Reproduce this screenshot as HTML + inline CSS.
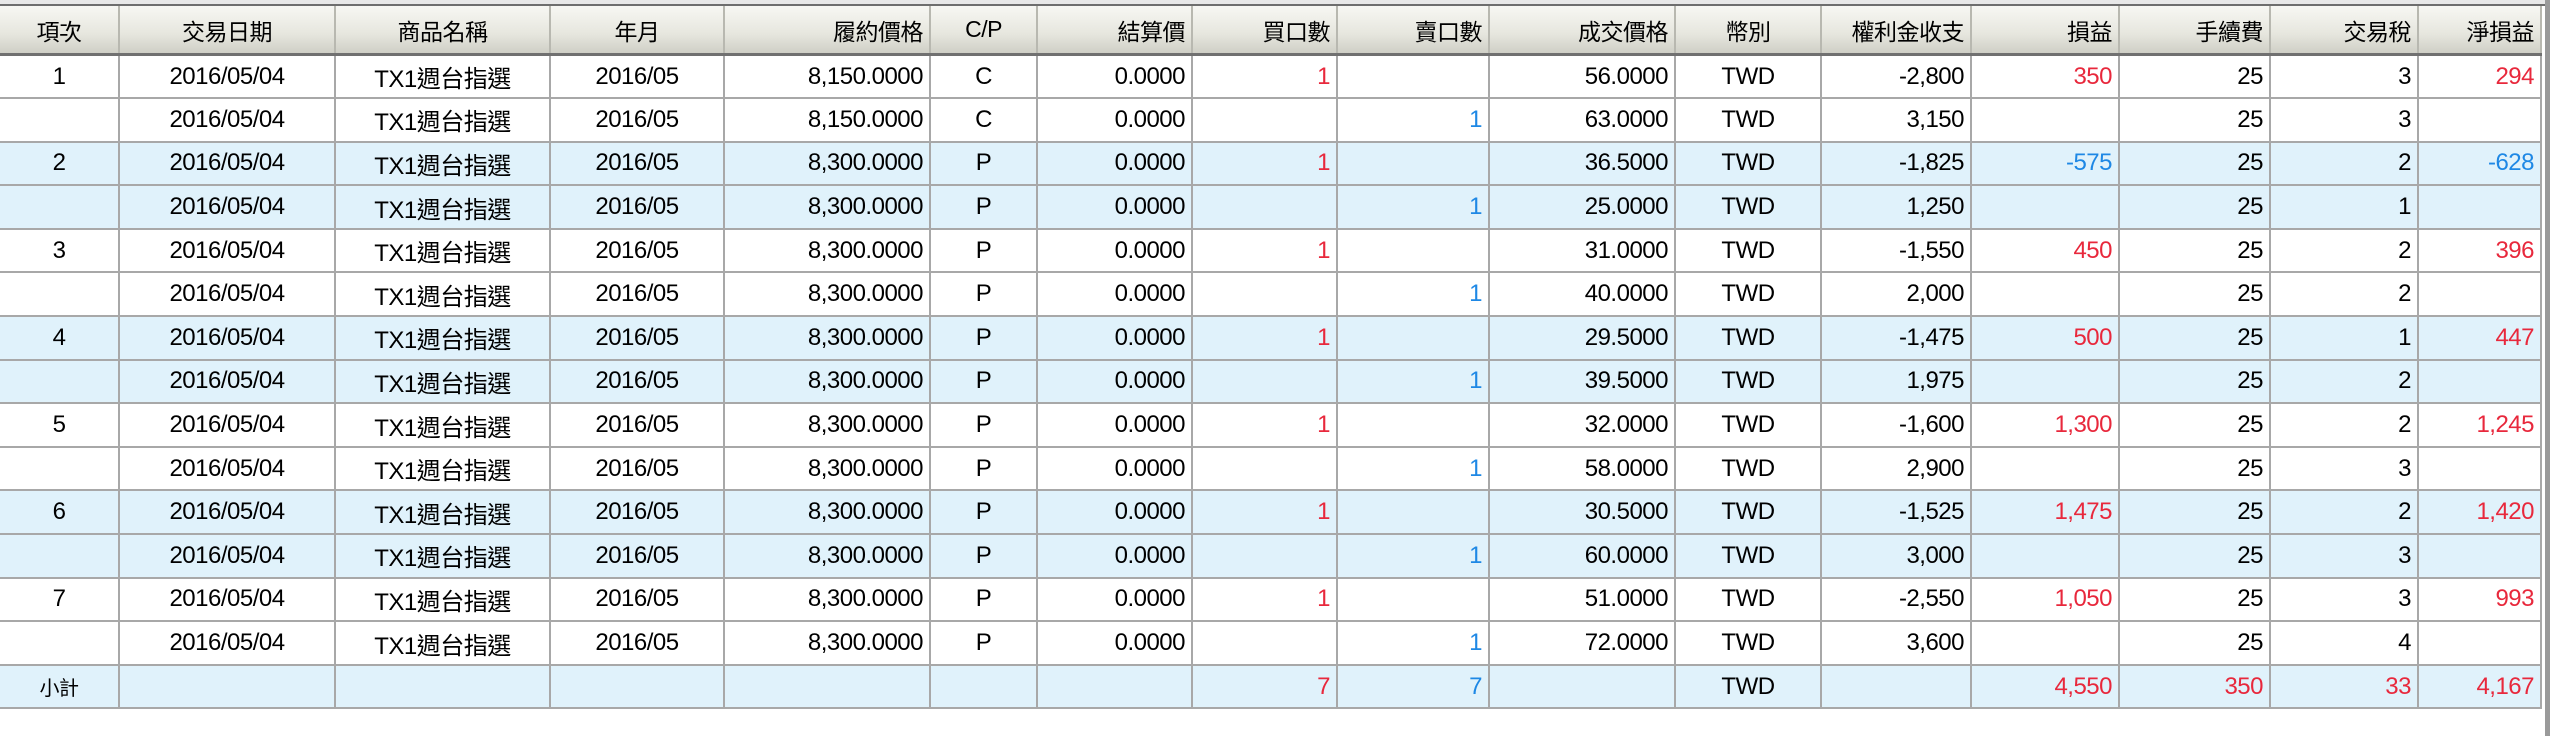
<!DOCTYPE html>
<html><head><meta charset="utf-8">
<style>
html,body{margin:0;padding:0;background:#fff;width:2550px;height:736px;overflow:hidden}
body{font-family:"Liberation Sans","Noto Sans CJK TC",sans-serif;color:#000}
.top{position:absolute;left:0;top:0;width:2545px;height:4px;background:#e8e8e8;border-bottom:2px solid #6e6e6e}
table{position:absolute;left:0;top:6px;border-collapse:collapse;table-layout:fixed;width:2541px}
th{height:47px;font-weight:normal;font-size:23px;background:linear-gradient(#f7f7f3,#e6e6de 60%,#cfcfc6);border-right:2px solid #b8b8b0;border-bottom:3px solid #707070;padding:0 6px;white-space:nowrap;letter-spacing:-0.5px}
tr{height:43.6px}
td{font-size:24px;border:2px solid #a8a8a8;border-top:0;padding:0 6px;white-space:nowrap;letter-spacing:-0.5px}
td:first-child{border-left:0}
tr.b td{background:#e0f2fb}
.c{text-align:center}.r{text-align:right}
.red{color:#e8283c}.blu{color:#1e88e5}
.sb{position:absolute;left:2545px;top:0;width:5px;height:736px;background:#9a9a9a}
</style></head><body>
<div class="top"></div>
<table>
<colgroup><col style="width:119px"><col style="width:216px"><col style="width:215px"><col style="width:174px"><col style="width:206px"><col style="width:107px"><col style="width:155px"><col style="width:145px"><col style="width:152px"><col style="width:186px"><col style="width:146px"><col style="width:150px"><col style="width:148px"><col style="width:151px"><col style="width:148px"><col style="width:123px"></colgroup>
<tr style="height:auto"><th class="c">項次</th><th class="c">交易日期</th><th class="c">商品名稱</th><th class="c">年月</th><th class="r">履約價格</th><th class="c">C/P</th><th class="r">結算價</th><th class="r">買口數</th><th class="r">賣口數</th><th class="r">成交價格</th><th class="c">幣別</th><th class="r">權利金收支</th><th class="r">損益</th><th class="r">手續費</th><th class="r">交易稅</th><th class="r">淨損益</th></tr>
<tr><td class="c">1</td><td class="c">2016/05/04</td><td class="c">TX1週台指選</td><td class="c">2016/05</td><td class="r">8,150.0000</td><td class="c">C</td><td class="r">0.0000</td><td class="r red">1</td><td></td><td class="r">56.0000</td><td class="c">TWD</td><td class="r">-2,800</td><td class="r red">350</td><td class="r">25</td><td class="r">3</td><td class="r red">294</td></tr>
<tr><td></td><td class="c">2016/05/04</td><td class="c">TX1週台指選</td><td class="c">2016/05</td><td class="r">8,150.0000</td><td class="c">C</td><td class="r">0.0000</td><td></td><td class="r blu">1</td><td class="r">63.0000</td><td class="c">TWD</td><td class="r">3,150</td><td></td><td class="r">25</td><td class="r">3</td><td></td></tr>
<tr class="b"><td class="c">2</td><td class="c">2016/05/04</td><td class="c">TX1週台指選</td><td class="c">2016/05</td><td class="r">8,300.0000</td><td class="c">P</td><td class="r">0.0000</td><td class="r red">1</td><td></td><td class="r">36.5000</td><td class="c">TWD</td><td class="r">-1,825</td><td class="r blu">-575</td><td class="r">25</td><td class="r">2</td><td class="r blu">-628</td></tr>
<tr class="b"><td></td><td class="c">2016/05/04</td><td class="c">TX1週台指選</td><td class="c">2016/05</td><td class="r">8,300.0000</td><td class="c">P</td><td class="r">0.0000</td><td></td><td class="r blu">1</td><td class="r">25.0000</td><td class="c">TWD</td><td class="r">1,250</td><td></td><td class="r">25</td><td class="r">1</td><td></td></tr>
<tr><td class="c">3</td><td class="c">2016/05/04</td><td class="c">TX1週台指選</td><td class="c">2016/05</td><td class="r">8,300.0000</td><td class="c">P</td><td class="r">0.0000</td><td class="r red">1</td><td></td><td class="r">31.0000</td><td class="c">TWD</td><td class="r">-1,550</td><td class="r red">450</td><td class="r">25</td><td class="r">2</td><td class="r red">396</td></tr>
<tr><td></td><td class="c">2016/05/04</td><td class="c">TX1週台指選</td><td class="c">2016/05</td><td class="r">8,300.0000</td><td class="c">P</td><td class="r">0.0000</td><td></td><td class="r blu">1</td><td class="r">40.0000</td><td class="c">TWD</td><td class="r">2,000</td><td></td><td class="r">25</td><td class="r">2</td><td></td></tr>
<tr class="b"><td class="c">4</td><td class="c">2016/05/04</td><td class="c">TX1週台指選</td><td class="c">2016/05</td><td class="r">8,300.0000</td><td class="c">P</td><td class="r">0.0000</td><td class="r red">1</td><td></td><td class="r">29.5000</td><td class="c">TWD</td><td class="r">-1,475</td><td class="r red">500</td><td class="r">25</td><td class="r">1</td><td class="r red">447</td></tr>
<tr class="b"><td></td><td class="c">2016/05/04</td><td class="c">TX1週台指選</td><td class="c">2016/05</td><td class="r">8,300.0000</td><td class="c">P</td><td class="r">0.0000</td><td></td><td class="r blu">1</td><td class="r">39.5000</td><td class="c">TWD</td><td class="r">1,975</td><td></td><td class="r">25</td><td class="r">2</td><td></td></tr>
<tr><td class="c">5</td><td class="c">2016/05/04</td><td class="c">TX1週台指選</td><td class="c">2016/05</td><td class="r">8,300.0000</td><td class="c">P</td><td class="r">0.0000</td><td class="r red">1</td><td></td><td class="r">32.0000</td><td class="c">TWD</td><td class="r">-1,600</td><td class="r red">1,300</td><td class="r">25</td><td class="r">2</td><td class="r red">1,245</td></tr>
<tr><td></td><td class="c">2016/05/04</td><td class="c">TX1週台指選</td><td class="c">2016/05</td><td class="r">8,300.0000</td><td class="c">P</td><td class="r">0.0000</td><td></td><td class="r blu">1</td><td class="r">58.0000</td><td class="c">TWD</td><td class="r">2,900</td><td></td><td class="r">25</td><td class="r">3</td><td></td></tr>
<tr class="b"><td class="c">6</td><td class="c">2016/05/04</td><td class="c">TX1週台指選</td><td class="c">2016/05</td><td class="r">8,300.0000</td><td class="c">P</td><td class="r">0.0000</td><td class="r red">1</td><td></td><td class="r">30.5000</td><td class="c">TWD</td><td class="r">-1,525</td><td class="r red">1,475</td><td class="r">25</td><td class="r">2</td><td class="r red">1,420</td></tr>
<tr class="b"><td></td><td class="c">2016/05/04</td><td class="c">TX1週台指選</td><td class="c">2016/05</td><td class="r">8,300.0000</td><td class="c">P</td><td class="r">0.0000</td><td></td><td class="r blu">1</td><td class="r">60.0000</td><td class="c">TWD</td><td class="r">3,000</td><td></td><td class="r">25</td><td class="r">3</td><td></td></tr>
<tr><td class="c">7</td><td class="c">2016/05/04</td><td class="c">TX1週台指選</td><td class="c">2016/05</td><td class="r">8,300.0000</td><td class="c">P</td><td class="r">0.0000</td><td class="r red">1</td><td></td><td class="r">51.0000</td><td class="c">TWD</td><td class="r">-2,550</td><td class="r red">1,050</td><td class="r">25</td><td class="r">3</td><td class="r red">993</td></tr>
<tr><td></td><td class="c">2016/05/04</td><td class="c">TX1週台指選</td><td class="c">2016/05</td><td class="r">8,300.0000</td><td class="c">P</td><td class="r">0.0000</td><td></td><td class="r blu">1</td><td class="r">72.0000</td><td class="c">TWD</td><td class="r">3,600</td><td></td><td class="r">25</td><td class="r">4</td><td></td></tr>
<tr class="b"><td class="c" style="font-size:20px">小計</td><td></td><td></td><td></td><td></td><td></td><td></td><td class="r red">7</td><td class="r blu">7</td><td></td><td class="c">TWD</td><td></td><td class="r red">4,550</td><td class="r red">350</td><td class="r red">33</td><td class="r red">4,167</td></tr>
</table>
<div class="sb"></div>
</body></html>
